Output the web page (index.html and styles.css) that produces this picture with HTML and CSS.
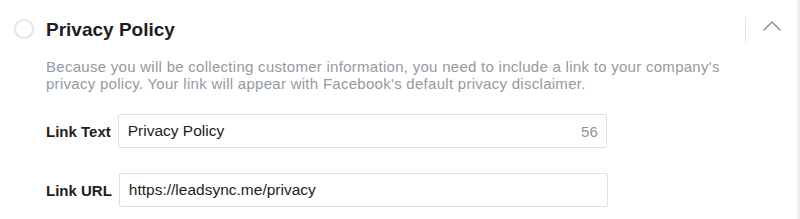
FILE: index.html
```html
<!DOCTYPE html>
<html lang="en">
<head>
  <meta charset="UTF-8" />
  <meta name="viewport" content="width=device-width, initial-scale=1.0"/>
  <title>Privacy Policy</title>
  <link rel="stylesheet" href="styles.css">
</head>
<body>

  <section class="panel">
    <div class="panel-head">
      <span class="step-circle"></span>
      <h2 class="panel-title">Privacy Policy</h2>
      <span class="head-divider"></span>
      <button class="toggle-btn" aria-label="Collapse">
        <svg width="20" height="12" viewBox="0 0 20 12">
          <path d="M2 10 L10 2 L18 10" fill="none" stroke="#8d949e" stroke-width="1.6" stroke-linecap="round" stroke-linejoin="round"/>
        </svg>
      </button>
    </div>

    <div class="panel-body">
      <p class="desc">
        Because you will be collecting customer information, you need to include a link to your company's
        privacy policy. Your link will appear with Facebook's default privacy disclaimer.
      </p>

      <div class="field">
        <label class="field-label">Link Text</label>
        <div class="input-box">
          <span class="input-value">Privacy Policy</span>
          <span class="counter">56</span>
        </div>
      </div>

      <div class="field">
        <label class="field-label">Link URL</label>
        <div class="input-box">
          <span class="input-value">https://leadsync.me/privacy</span>
        </div>
      </div>
    </div>
  </section>

</body>
</html>
```

FILE: styles.css
```css
body {
  margin: 0;
  padding: 0;
  background: #f0f1f3;
  font-family: 'Liberation Sans', Arial, sans-serif;
  color: #1c1e21;
}

.panel {
  width: 797px;
  height: 219px;
  background: white;
  overflow: hidden;
}

.panel-head {
  display: flex;
  align-items: center;
  padding: 17px 0 0 14px;
}

.step-circle {
  width: 16px;
  height: 16px;
  border: 2px solid #e4e5e8;
  border-radius: 50%;
  flex-shrink: 0;
  margin-top: -2px;
}

.panel-title {
  margin: 0 0 0 12px;
  font-size: 19px;
  line-height: 22px;
  font-weight: bold;
  flex: 1;
}

.head-divider {
  width: 1px;
  height: 25px;
  background: #e4e5e8;
}

.toggle-btn {
  background: none;
  border: none;
  padding: 0;
  margin: 0 15px 7px 16px;
  width: 20px;
  height: 12px;
  display: flex;
}

.panel-body {
  padding: 16px 0 0 46px;
}

.desc {
  margin: 0 0 22px;
  width: 700px;
  font-size: 15px;
  line-height: 17px;
  letter-spacing: 0.28px;
  color: #949aa2;
}

.field {
  display: flex;
  align-items: center;
  gap: 7px;
  margin-bottom: 25px;
}

.field-label {
  font-size: 15px;
  font-weight: bold;
  color: #1c1e21;
}

.input-box {
  display: flex;
  align-items: center;
  justify-content: space-between;
  width: 489px;
  height: 34px;
  box-sizing: border-box;
  border: 1px solid #dddfe2;
  border-radius: 2px;
  padding: 0 8px 0 9px;
}

.input-value {
  font-size: 15.5px;
  color: #1c1e21;
}

.counter {
  font-size: 15px;
  color: #90949c;
}
```
